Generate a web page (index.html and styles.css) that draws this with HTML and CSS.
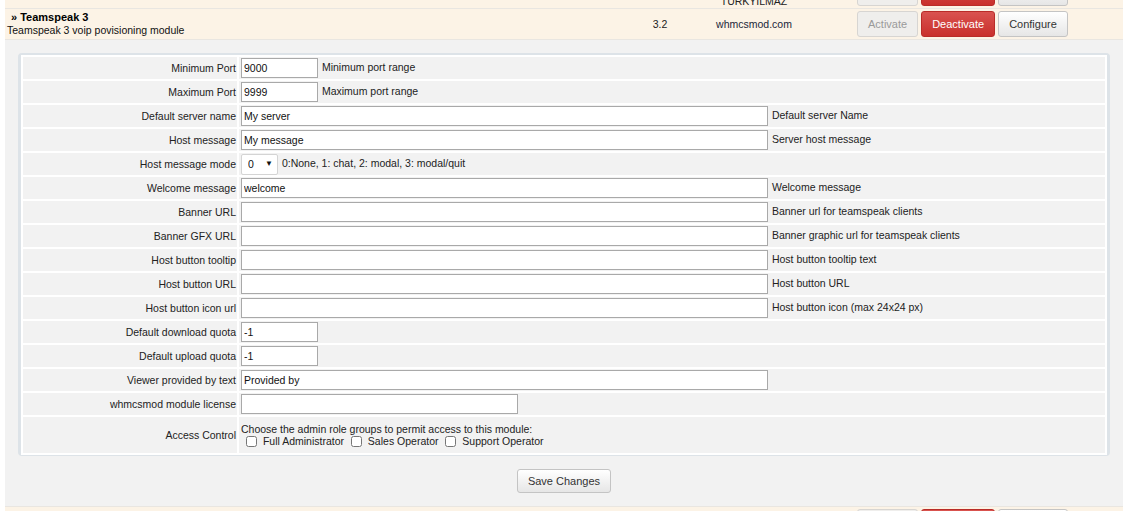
FILE: index.html
```html
<!DOCTYPE html>
<html lang="en">
<head>
    <meta charset="UTF-8">
    <title>Addon Modules</title>
    <link rel="stylesheet" href="styles.css">
</head>
<body>
    <div id="modules">
        <!-- previous module, scrolled mostly out of view -->
        <div class="module-row module-prev">
            <div class="module-info"></div>
            <div class="module-version"></div>
            <div class="module-author">TÜRKYILMAZ</div>
            <div class="module-actions">
                <button class="btn btn-disabled">Activate</button>
                <button class="btn btn-danger">Deactivate</button>
                <button class="btn btn-default">Configure</button>
            </div>
        </div>

        <div class="module-row">
            <div class="module-info">
                <div class="module-name">&raquo; Teamspeak 3</div>
                <div class="module-desc">Teamspeak 3 voip povisioning module</div>
            </div>
            <div class="module-version">3.2</div>
            <div class="module-author"><a href="#">whmcsmod.com</a></div>
            <div class="module-actions">
                <button class="btn btn-disabled">Activate</button>
                <button class="btn btn-danger">Deactivate</button>
                <button class="btn btn-default">Configure</button>
            </div>
        </div>

        <div class="module-config">
            <div class="config-panel">
                <table class="form">
                    <tr>
                        <td class="fieldlabel">Minimum Port</td>
                        <td class="fieldarea"><input type="text" class="input-small" value="9000"> Minimum port range</td>
                    </tr>
                    <tr>
                        <td class="fieldlabel">Maximum Port</td>
                        <td class="fieldarea"><input type="text" class="input-small" value="9999"> Maximum port range</td>
                    </tr>
                    <tr>
                        <td class="fieldlabel">Default server name</td>
                        <td class="fieldarea"><input type="text" class="input-wide" value="My server"> Default server Name</td>
                    </tr>
                    <tr>
                        <td class="fieldlabel">Host message</td>
                        <td class="fieldarea"><input type="text" class="input-wide" value="My message"> Server host message</td>
                    </tr>
                    <tr>
                        <td class="fieldlabel">Host message mode</td>
                        <td class="fieldarea">
                            <span class="select-wrap">
                                <select class="select-small">
                                    <option>0</option>
                                    <option>1</option>
                                    <option>2</option>
                                    <option>3</option>
                                </select>
                                <span class="select-arrow">&#9660;</span>
                            </span>
                            0:None, 1: chat, 2: modal, 3: modal/quit
                        </td>
                    </tr>
                    <tr>
                        <td class="fieldlabel">Welcome message</td>
                        <td class="fieldarea"><input type="text" class="input-wide" value="welcome"> Welcome message</td>
                    </tr>
                    <tr>
                        <td class="fieldlabel">Banner URL</td>
                        <td class="fieldarea"><input type="text" class="input-wide" value=""> Banner url for teamspeak clients</td>
                    </tr>
                    <tr>
                        <td class="fieldlabel">Banner GFX URL</td>
                        <td class="fieldarea"><input type="text" class="input-wide" value=""> Banner graphic url for teamspeak clients</td>
                    </tr>
                    <tr>
                        <td class="fieldlabel">Host button tooltip</td>
                        <td class="fieldarea"><input type="text" class="input-wide" value=""> Host button tooltip text</td>
                    </tr>
                    <tr>
                        <td class="fieldlabel">Host button URL</td>
                        <td class="fieldarea"><input type="text" class="input-wide" value=""> Host button URL</td>
                    </tr>
                    <tr>
                        <td class="fieldlabel">Host button icon url</td>
                        <td class="fieldarea"><input type="text" class="input-wide" value=""> Host button icon (max 24x24 px)</td>
                    </tr>
                    <tr>
                        <td class="fieldlabel">Default download quota</td>
                        <td class="fieldarea"><input type="text" class="input-small" value="-1"></td>
                    </tr>
                    <tr>
                        <td class="fieldlabel">Default upload quota</td>
                        <td class="fieldarea"><input type="text" class="input-small" value="-1"></td>
                    </tr>
                    <tr>
                        <td class="fieldlabel">Viewer provided by text</td>
                        <td class="fieldarea"><input type="text" class="input-wide" value="Provided by"></td>
                    </tr>
                    <tr>
                        <td class="fieldlabel">whmcsmod module license</td>
                        <td class="fieldarea"><input type="text" class="input-medium" value=""></td>
                    </tr>
                    <tr class="tall">
                        <td class="fieldlabel">Access Control</td>
                        <td class="fieldarea">
                            <div>Choose the admin role groups to permit access to this module:</div>
                            <div class="roles">
                                <label><input type="checkbox"> Full Administrator</label>
                                <label><input type="checkbox"> Sales Operator</label>
                                <label><input type="checkbox"> Support Operator</label>
                            </div>
                        </td>
                    </tr>
                </table>
            </div>
            <div class="save-bar">
                <button class="btn btn-default btn-save">Save Changes</button>
            </div>
        </div>

        <!-- next module, only its top edge is on screen -->
        <div class="module-row module-next">
            <div class="module-info"></div>
            <div class="module-version"></div>
            <div class="module-author"></div>
            <div class="module-actions">
                <button class="btn btn-disabled">Activate</button>
                <button class="btn btn-danger">Deactivate</button>
                <button class="btn btn-default">Configure</button>
            </div>
        </div>
    </div>
</body>
</html>
```

FILE: styles.css
```css
body {
    font-family: "Liberation Sans", Arial, sans-serif;
    font-size: 10.5px;
    color: #222;
    margin: 0;
    padding: 0;
    background-color: #fff;
    overflow: hidden;
}

#modules {
    margin: 0 6px 0 5px;
}

/* module list rows */
.module-row {
    display: grid;
    grid-template-columns: 1fr 60px 128px 305px;
    align-items: center;
    height: 30px;
    background-color: #fcf3e6;
    border-bottom: 1px solid #e9e6e1;
}

.module-prev {
    margin-top: -22px;
    overflow: hidden;
}

.module-prev .module-author {
    align-self: end;
    margin-bottom: 1px;
}

.module-next {
    height: 5px;
    overflow: hidden;
    border-top: 1px solid #e9e6e1;
    border-bottom: none;
    align-items: start;
}

.module-next .module-actions {
    padding-top: 2px;
}

.module-info {
    padding-left: 2px;
}

.module-name {
    font-weight: bold;
    color: #000;
    padding-left: 4px;
    font-size: 11px;
    line-height: 13px;
}

.module-desc {
    color: #111;
    font-size: 10.5px;
    line-height: 13px;
}

.module-version {
    text-align: center;
    color: #222;
}

.module-author {
    text-align: center;
}

.module-author a {
    color: #1b2538;
    text-decoration: none;
}

.module-actions {
    display: flex;
    padding-left: 39px;
}

.btn {
    font-family: "Liberation Sans", Arial, sans-serif;
    font-size: 11px;
    height: 26px;
    padding: 0 10px;
    margin: 0 3px 0 0;
    border-radius: 3px;
    border: 1px solid #ccc;
    cursor: pointer;
}

.btn-disabled {
    background-color: #efeeec;
    border-color: #d7d5d2;
    color: #9a9a9a;
}

.btn-danger {
    background: linear-gradient(#d9534f, #c9302c);
    border-color: #b92c28;
    color: #fff;
}

.btn-default {
    background: linear-gradient(#fff, #e6e6e6);
    border-color: #c4c4c4;
    color: #333;
}

/* configuration area */
.module-config {
    background-color: #f2f2f2;
    padding: 13px 13px 0 13px;
}

.config-panel {
    border: 3px solid #dde3e8;
    border-radius: 4px;
    background-color: #fff;
}

.form {
    width: 100%;
    border-collapse: separate;
    border-spacing: 2px;
    background-color: #fff;
    margin: -1px 0 -2px 0;
}

.form td {
    background-color: #f2f2f2;
    height: 22px;
    padding: 0;
}

.form tr.tall td {
    height: 36px;
}

.fieldlabel {
    width: 213px;
    text-align: right;
    padding-right: 1px !important;
    white-space: nowrap;
}

.fieldarea {
    padding-left: 2px !important;
}

input[type="text"] {
    font-family: "Liberation Sans", Arial, sans-serif;
    font-size: 10.5px;
    color: #111;
    height: 20px;
    padding: 0 2px;
    margin: 0 1px 0 0;
    border: 1px solid #a9a9a9;
    background-color: #fff;
    box-sizing: border-box;
    vertical-align: middle;
}

.input-small {
    width: 77px;
}

.input-medium {
    width: 277px;
}

.input-wide {
    width: 527px;
}

.select-wrap {
    position: relative;
    display: inline-block;
    vertical-align: middle;
    margin-right: 1px;
}

.select-small {
    appearance: none;
    -webkit-appearance: none;
    font-family: "Liberation Sans", Arial, sans-serif;
    font-size: 10.5px;
    width: 37px;
    height: 21px;
    padding: 0 0 0 6px;
    border: 1px solid #d4d4d4;
    border-radius: 2px;
    background-color: #fff;
    color: #111;
    display: block;
}

.select-arrow {
    position: absolute;
    right: 5px;
    top: 5px;
    font-size: 8px;
    color: #111;
    pointer-events: none;
}

.roles {
    padding-left: 3px;
}

.roles label {
    margin-right: 2px;
}

.roles input[type="checkbox"] {
    width: 11px;
    height: 11px;
    margin: 0 3px 0 2px;
    vertical-align: -2px;
}

.save-bar {
    text-align: center;
    padding: 13px 0 13px 0;
}

.btn-save {
    height: 24px;
    margin: 0;
}
```
